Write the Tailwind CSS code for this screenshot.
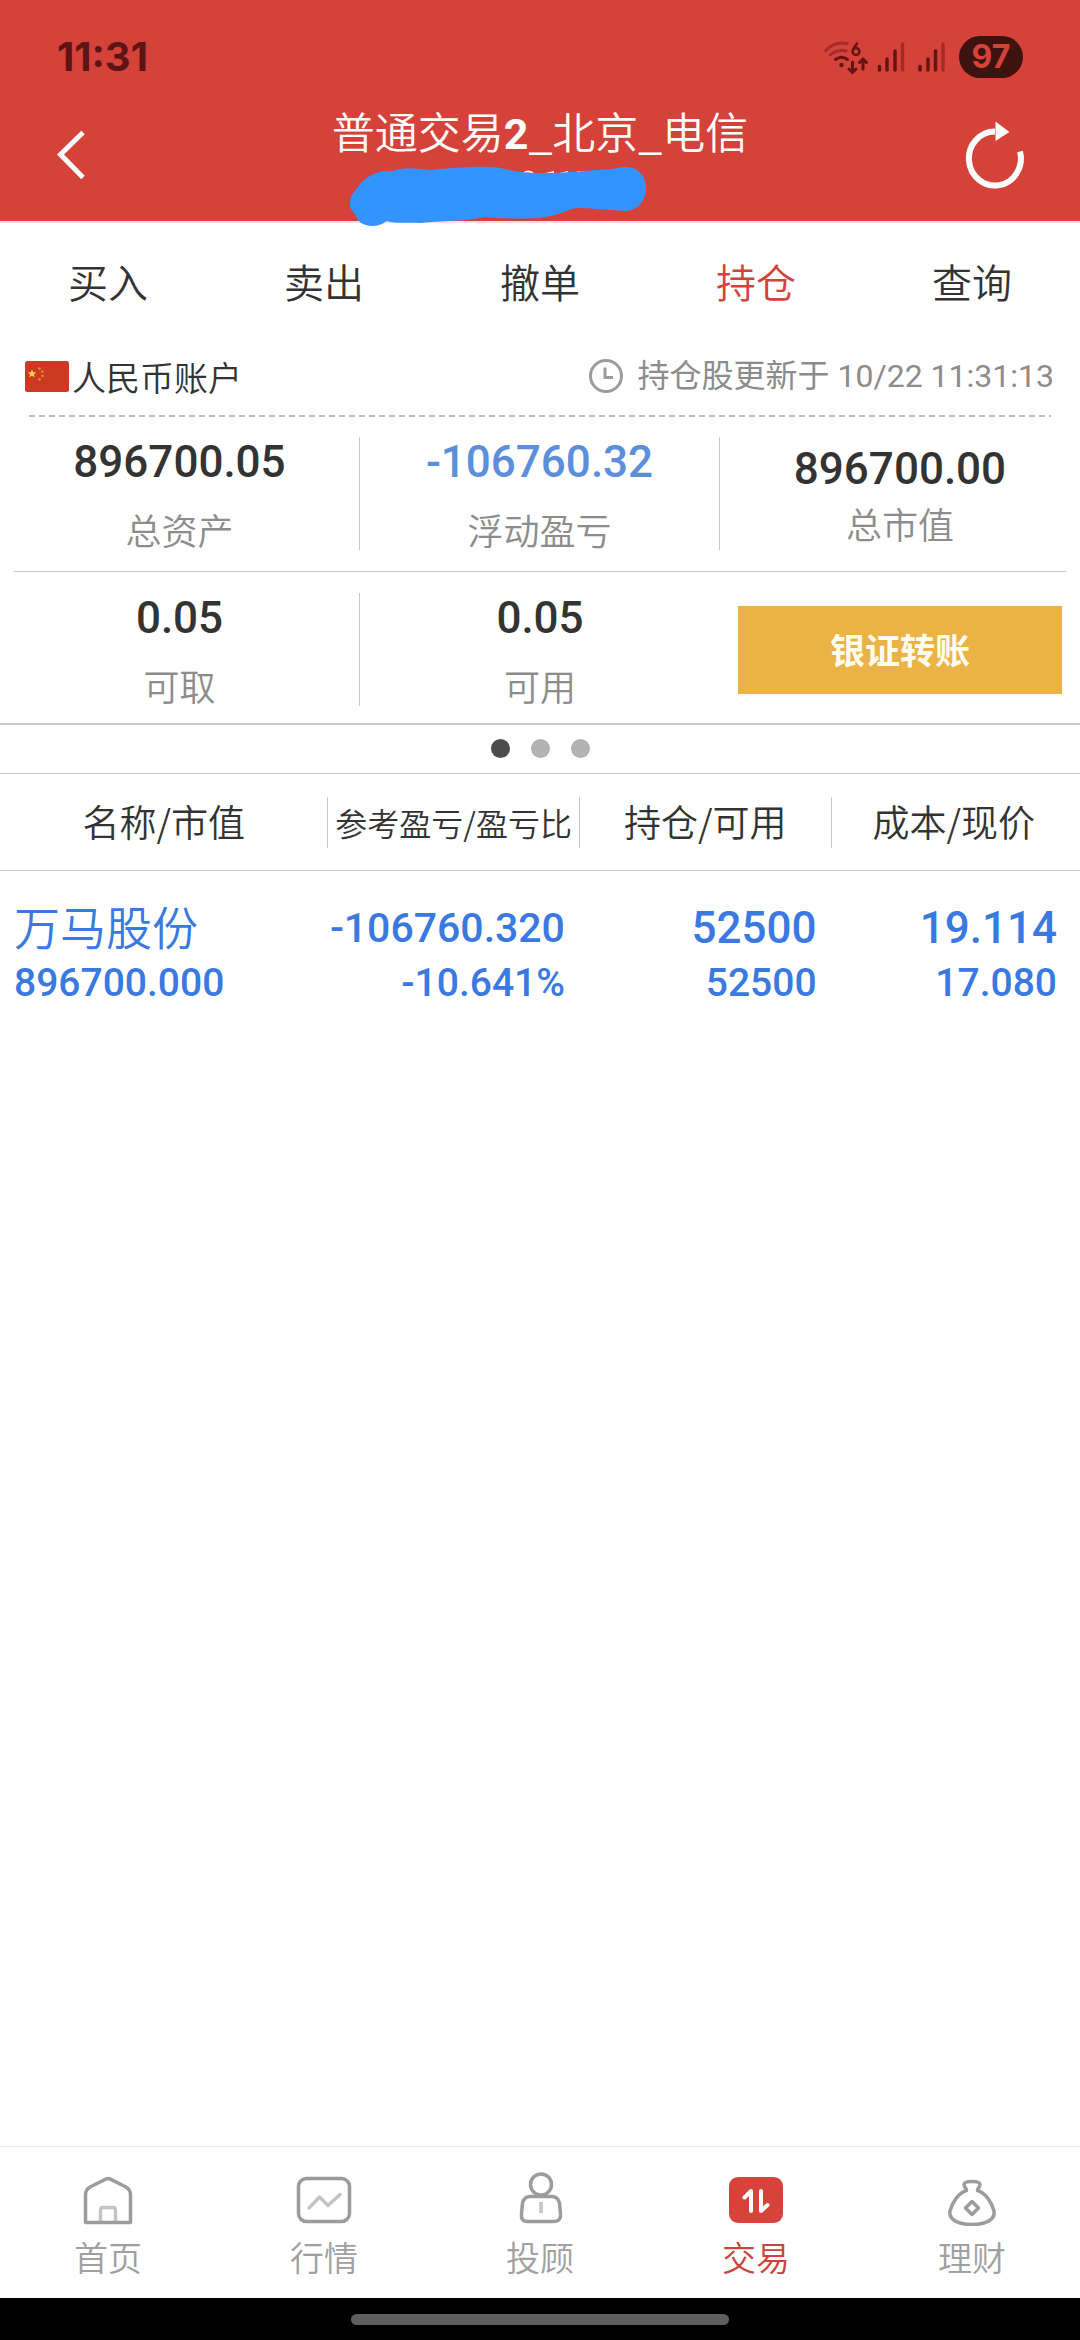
<!DOCTYPE html>
<html lang="zh-CN">
<head>
  <meta charset="UTF-8" />
  <meta name="viewport" content="width=device-width,initial-scale=1" />
  <title>持仓</title>
  <script src="https://cdn.jsdelivr.net/npm/@tailwindcss/browser@4"></script>
</head>

<body class="bg-white min-h-screen flex flex-col text-[#333] font-['Noto_Sans_CJK_SC',sans-serif] font-[350]">

  <!-- ============ HEADER ============ -->
  <header class="bg-[#d54239] border-b-2 border-[#fbdedc]">
    <div class="h-[110px] pt-1 pl-[57px] pr-[57px] flex items-center justify-between">
      <span class="font-['Inter',sans-serif] font-bold text-[40px] text-[#5c1414]">11:31</span>
      <div class="flex items-center gap-[14px]">
        <!-- wifi + sinal -->
        <svg class="w-[122px] h-[42px]" viewBox="0 0 122 42" fill="none" stroke="#651313" stroke-linecap="round">
          <g stroke-width="3">
            <path d="M2.5 14.5 Q12 5 24 7.5" stroke="#a42c28" />
            <path d="M7.5 19 Q14 13 23 15" stroke="#a42c28" />
            <path d="M12.5 23.5 Q18.5 19 24.5 23.5" />
            <path d="M29.500 26v10M26 33l3.500 3.500 3.500-3.500M40 33V24M36.500 26.500l3.500-3.500 3.500 3.500" />
            <path d="M34 7.500 L30 13.500" stroke-width="2.500" />
            <circle cx="33" cy="15.500" r="3.500" stroke-width="2.500" />
          </g>
          <circle cx="18.500" cy="29" r="2.200" fill="#651313" stroke="none" />
          <g stroke-width="3.500">
            <path d="M56.500 30.500v3.500M64 23v11M72 15v19M97 30.500v3.500M105 23v11M112.500 15v19" />
            <path d="M79.500 8v26M120 8v26" stroke="#a42c28" />
          </g>
        </svg>
        <span class="w-[64px] h-[42px] rounded-full bg-[#3d120f] text-[#d54239] font-['Inter',sans-serif] font-bold text-[32px] flex items-center justify-center">97</span>
      </div>
    </div>

    <div class="relative h-[111px] flex items-start justify-between">
      <button class="w-[172px] h-[90px] pl-[54px] flex items-center" aria-label="返回">
        <svg class="w-[32px] h-[52px]" viewBox="0 0 32 52" fill="none" stroke="#fff" stroke-width="5"><path d="M29 3.500 6.500 25.500 29 48.500" /></svg>
      </button>
      <h1 class="text-[43px] leading-[40px] text-white">普通交易<b class="font-['Roboto',sans-serif]">2</b>_北京_电信</h1>
      <button class="w-[172px] h-[90px] flex items-center justify-center" aria-label="刷新">
        <svg class="w-[64px] h-[70px]" viewBox="0 0 64 70" fill="none">
          <path d="M33 11.500 A26 27 0 1 0 58 31.500" stroke="#fff" stroke-width="6" />
          <path d="M33.500 1.500 47.500 12 33.500 21z" fill="#fff" />
        </svg>
      </button>
      <!-- risco azul sobre a conta -->
      <svg class="absolute left-1/2 -translate-x-1/2 top-[54px] w-[400px] h-[66px]" viewBox="340 164 400 66">
        <path d="M524 173q4-3 9 0M546 174l8-2M560 174l8-2M577 172h14" stroke="#fff" stroke-width="2" fill="none" />
        <path fill="#3394ff" d="M350 203C350 196 354 192 358 187 364 178 373 173 383 171 388 170 390 172 393 171 402 167 412 168 430 170 445 169 470 166 492 167 505 168 510 171 522 172 545 175 580 171 612 169 620 167 626 166 633 168 642 172 647 180 646 190 645 203 636 211 625 211 608 210 592 208 577 208 568 209 560 215 545 217 530 219 510 219 484 217 470 221 440 221 420 223 405 222 396 224 387 221 380 226 373 227 366 225 359 223 357 219 355 214 351 210 350 207 350 203z" />
      </svg>
    </div>
  </header>

  <!-- ============ TABS ============ -->
  <nav class="h-[119px] pb-1 grid grid-cols-5 text-[40px]">
    <button>买入</button>
    <button>卖出</button>
    <button>撤单</button>
    <button class="text-[#d0443c]">持仓</button>
    <button>查询</button>
  </nav>

  <!-- ============ CONTA ============ -->
  <section>
    <div class="h-[72px] pb-1 pl-[25px] pr-[26px] flex items-center justify-between">
      <div class="flex items-center gap-[3px]">
        <svg class="w-[44px] h-[31px]" viewBox="0 0 44 31">
          <rect width="44" height="31" rx="2.500" fill="#cd3a24" />
          <path fill="#fbd34d" d="M7 8.500 8.200 11.300 11.200 11.500 8.900 13.400 9.700 16.300 7 14.700 4.300 16.300 5.100 13.400 2.800 11.500 5.800 11.300z" />
          <g fill="#e9892f"><circle cx="14.500" cy="7.500" r="1.300" /><circle cx="17.500" cy="10.500" r="1.300" /><circle cx="17.500" cy="15" r="1.300" /><circle cx="14.500" cy="18.500" r="1.300" /></g>
        </svg>
        <h2 class="text-[34px]">人民币账户</h2>
      </div>
      <div class="flex items-center gap-[14px] text-[32px] text-[#8c8c8c]">
        <svg class="w-[36px] h-[36px]" viewBox="0 0 36 36" fill="none" stroke="#9c9c9c" stroke-width="3"><circle cx="18" cy="18" r="15.500" /><path d="M17 9.500V19.500H25" /></svg>
        <span class="font-['Roboto','Noto_Sans_CJK_SC',sans-serif] font-normal">持仓股更新于 10/22 11:31:13</span>
      </div>
    </div>
    <div class="px-[29px]">
      <svg class="block w-full h-[4px]"><line x1="0" y1="2" x2="100%" y2="2" stroke="#bdbdbd" stroke-width="2" stroke-dasharray="6 4" /></svg>
    </div>

    <dl class="grid grid-cols-3 pt-[19px] pb-[21px] text-center">
      <div class="h-[113px] flex flex-col justify-between border-r border-[#c8c8c8]">
        <dd class="font-['Roboto',sans-serif] font-medium text-[44px] leading-[50px]">896700.05</dd>
        <dt class="text-[36px] leading-[42px] text-[#8c8c8c]">总资产</dt>
      </div>
      <div class="h-[113px] flex flex-col justify-between border-r border-[#c8c8c8]">
        <dd class="font-['Roboto',sans-serif] font-medium text-[44px] leading-[50px] text-[#5b8edb]">-106760.32</dd>
        <dt class="text-[36px] leading-[42px] text-[#8c8c8c]">浮动盈亏</dt>
      </div>
      <div class="h-[113px] flex flex-col justify-center gap-[8px]">
        <dd class="font-['Roboto',sans-serif] font-medium text-[44px] leading-[50px]">896700.00</dd>
        <dt class="text-[36px] leading-[42px] text-[#8c8c8c]">总市值</dt>
      </div>
    </dl>
    <hr class="mx-[14px] border-[#c8c8c8]" />
    <div class="grid grid-cols-3 pt-[21px] pb-[17px] text-center">
      <div class="h-[113px] flex flex-col justify-between border-r border-[#c8c8c8]">
        <p class="font-['Roboto',sans-serif] font-medium text-[44px] leading-[50px]">0.05</p>
        <p class="text-[36px] leading-[42px] text-[#8c8c8c]">可取</p>
      </div>
      <div class="h-[113px] flex flex-col justify-between">
        <p class="font-['Roboto',sans-serif] font-medium text-[44px] leading-[50px]">0.05</p>
        <p class="text-[36px] leading-[42px] text-[#8c8c8c]">可用</p>
      </div>
      <div class="px-[18px] flex items-center">
        <button class="w-full h-[88px] bg-[#ebb346] text-[#fffdf0] text-[35px] font-bold">银证转账</button>
      </div>
    </div>
    <div class="h-[51px] pb-[2px] border-t-2 border-b border-[#c8c8c8] flex items-center justify-center gap-[21px]">
      <span class="w-[19px] h-[19px] rounded-full bg-[#4c4c4c]"></span>
      <span class="w-[19px] h-[19px] rounded-full bg-[#b3b3b3]"></span>
      <span class="w-[19px] h-[19px] rounded-full bg-[#b3b3b3]"></span>
    </div>
  </section>

  <!-- ============ POSIÇÕES ============ -->
  <main class="flex-1">
    <table class="w-full table-fixed border-separate border-spacing-0">
      <thead>
        <tr class="h-[97px] text-[37px]">
          <th class="w-[30.4%] p-0 font-[350] border-b border-[#c8c8c8]"><div class="h-[51px] flex items-center justify-center border-r border-[#c8c8c8]">名称/市值</div></th>
          <th class="w-[23.3%] p-0 font-[350] border-b border-[#c8c8c8]"><div class="h-[51px] flex items-center justify-center border-r border-[#c8c8c8] text-[32px] whitespace-nowrap">参考盈亏/盈亏比</div></th>
          <th class="w-[23.3%] p-0 font-[350] border-b border-[#c8c8c8]"><div class="h-[51px] flex items-center justify-center border-r border-[#c8c8c8]">持仓/可用</div></th>
          <th class="w-[23%] p-0 font-[350] border-b border-[#c8c8c8]"><div class="h-[51px] flex items-center justify-center pr-1">成本/现价</div></th>
        </tr>
      </thead>
      <tbody class="font-['Roboto',sans-serif] font-medium text-[#3a78e2] text-[39px] leading-[55px] text-right whitespace-nowrap">
        <tr>
          <td class="pl-[14px] pt-[30px] text-left">
            <div class="font-['Noto_Sans_CJK_SC',sans-serif] font-[350] text-[46px] leading-[49px] pb-[6px]">万马股份</div>
            <div>896700.000</div>
          </td>
          <td class="pt-[30px] pr-[15px]"><div class="text-[41px]">-106760.320</div><div>-10.641%</div></td>
          <td class="pt-[30px] pr-[15px]"><div class="text-[44px]">52500</div><div>52500</div></td>
          <td class="pt-[30px] pr-[23px]"><div class="text-[44px]">19.114</div><div>17.080</div></td>
        </tr>
      </tbody>
    </table>
  </main>

  <!-- ============ MENU INFERIOR ============ -->
  <nav class="h-[152px] border-t border-[#ebebeb] grid grid-cols-5 text-[34px] leading-[50px] text-[#a0a0a0]">
    <a href="#" class="pt-[23px] flex flex-col items-center gap-[6px]">
      <svg class="w-[60px] h-[56px]" viewBox="0 0 60 56" fill="none" stroke="#9c9c9c" stroke-width="3.500" stroke-linejoin="round">
        <path d="M22.500 52V40q0-2.500 2.500-2.500h10q2.500 0 2.500 2.500V52" stroke="#c4c4c4" />
        <path d="M7.500 52.500V25q0-5.500 5-8.200L27.500 9.200q2.500-1.200 5 0L47.500 16.800q5 2.700 5 8.200V52.500z" />
      </svg>
      首页
    </a>
    <a href="#" class="pt-[23px] flex flex-col items-center gap-[6px]">
      <svg class="w-[60px] h-[56px]" viewBox="0 0 60 56" fill="none" stroke="#9c9c9c" stroke-width="3.500" stroke-linejoin="round" stroke-linecap="round">
        <rect x="4.500" y="8.500" width="51" height="43" rx="8" />
        <path d="M15 38 25.500 27 34 35.500 46 24.500" stroke="#c4c4c4" />
      </svg>
      行情
    </a>
    <a href="#" class="pt-[23px] flex flex-col items-center gap-[6px]">
      <svg class="w-[60px] h-[56px]" viewBox="0 0 60 56" fill="none" stroke="#9c9c9c" stroke-width="3.500">
        <circle cx="31" cy="14.500" r="10.500" />
        <path d="M20.500 26.500H41.500Q48 26.500 49.500 33L50.500 44Q51 51.500 44 51.500H17.500Q10.500 51.500 11.500 44L12.500 33Q14 26.500 20.500 26.500z" />
        <path d="M31 32V43" stroke="#c4c4c4" />
      </svg>
      投顾
    </a>
    <a href="#" class="pt-[23px] flex flex-col items-center gap-[6px] text-[#c8443c]">
      <svg class="w-[60px] h-[56px]" viewBox="0 0 60 56" fill="none" stroke="#fff" stroke-width="4" stroke-linejoin="round" stroke-linecap="round">
        <rect x="3" y="7" width="54" height="46" rx="9" fill="#d7423a" stroke="none" />
        <path d="M18.500 27.500 25 21V41M35 21V41L41.500 35" />
      </svg>
      交易
    </a>
    <a href="#" class="pt-[23px] flex flex-col items-center gap-[6px]">
      <svg class="w-[60px] h-[56px]" viewBox="0 0 60 56" fill="none" stroke="#9c9c9c" stroke-width="3.500" stroke-linejoin="round">
        <path d="M24.500 20.500C24.500 18 22 17 22 14.500 22 12 25 11.500 30 11.500S38 12 38 14.500C38 17 35.500 18 35.500 20.500 44 23 50 33 52 41 53.500 49 45 54.500 30 54.500S6.500 49 8 41C10 33 16 23 24.500 20.500z" />
        <path d="M30 31.500 36.500 38 30 44.500 23.500 38z" />
      </svg>
      理财
    </a>
  </nav>
  <div class="h-[42px] bg-black flex items-center justify-center pt-px">
    <span class="w-[35%] h-[11px] rounded-full bg-[#5e5e5e]"></span>
  </div>
</body>
</html>
